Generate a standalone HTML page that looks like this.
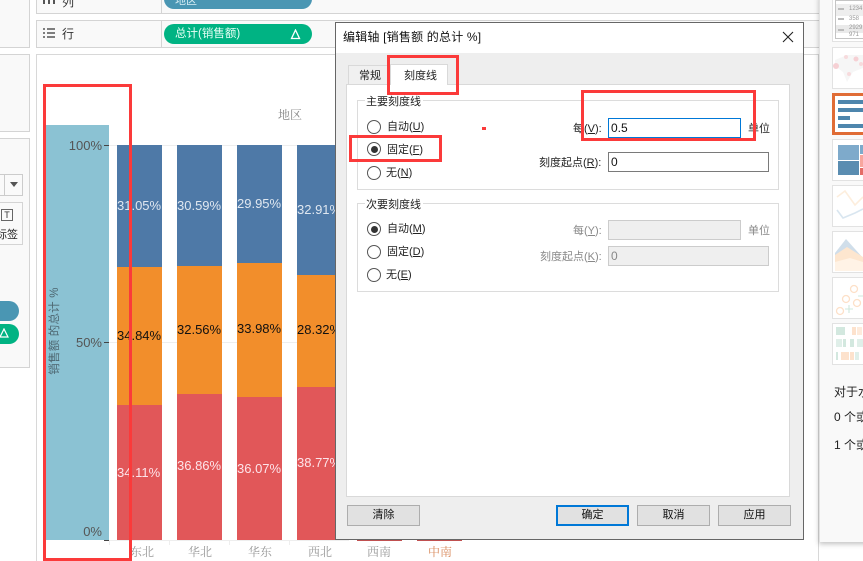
<!DOCTYPE html>
<html><head><meta charset="utf-8">
<style>
html,body{margin:0;padding:0;background:#fff}
#p{position:relative;width:863px;height:561px;overflow:hidden;background:#fff;font-family:"Liberation Sans","Noto Sans CJK SC",sans-serif;font-size:11px;color:#222}
#p div{position:absolute;box-sizing:border-box}
#p svg{position:absolute}
.t{white-space:nowrap;line-height:14px}
.box{background:#f9f9f9;border:1px solid #d4d4d4}
.lb{font-size:13px;color:#fff;white-space:nowrap;line-height:16px}
.u{text-decoration:underline}
.r{width:14px;height:14px;border:1px solid #555;border-radius:50%;background:#fff}
.r.on::after{content:"";position:absolute;left:2.5px;top:2.5px;width:7px;height:7px;border-radius:50%;background:#333}
.red{border:3px solid #fb3a3a}
.g{color:#888}
.btn{background:#e1e1e1;border:1px solid #adadad;text-align:center;font-size:11px;line-height:19px;color:#111}
.ax{font-size:13px;color:#555;white-space:nowrap;line-height:14px;text-align:right}
.xl{font-size:12px;color:#999;white-space:nowrap;line-height:14px;font-family:"Noto Serif CJK SC","Liberation Serif",serif}
.th{left:832px;width:40px;height:42px;background:#fff;border:1px solid #e2e2e2}
.tk{top:540px;width:1px;height:5px;background:#eee}
</style></head><body><div id="p">

<!-- left panels -->
<div style="left:-2px;top:-2px;width:32px;height:50px;background:#f9f9f9;border:1px solid #d4d4d4"></div>
<div style="left:-2px;top:54px;width:32px;height:78px;background:#f9f9f9;border:1px solid #d4d4d4"></div>
<div style="left:-2px;top:138px;width:32px;height:230px;background:#f9f9f9;border:1px solid #d4d4d4"></div>
<div style="left:-2px;top:174px;width:25px;height:22px;background:#fafafa;border:1px solid #ccc"></div>
<div style="left:4px;top:174px;width:1px;height:22px;background:#ccc"></div>
<svg style="left:9px;top:182px" width="10" height="6"><path d="M1 0H9L5 5Z" fill="#555"/></svg>
<div style="left:-2px;top:202px;width:25px;height:43px;background:#fafafa;border:1px solid #d4d4d4"></div>
<div style="left:1px;top:209px;width:12px;height:12px;border:1px solid #666;font-size:9px;line-height:10px;text-align:center;color:#333">T</div>
<div class="t" style="left:-2px;top:228px;font-size:11px;color:#222;width:20px;overflow:hidden;direction:rtl">标签</div>
<div style="left:-20px;top:301px;width:39px;height:20px;border-radius:10px;background:#4a96b3"></div>
<div style="left:-20px;top:324px;width:39px;height:20px;border-radius:10px;background:#00b383"></div>
<svg style="left:0;top:328px" width="10" height="11"><path d="M4 1L8 9H0Z" fill="none" stroke="#fff" stroke-width="1.2"/></svg>

<!-- shelves -->
<div class="box" style="left:36px;top:-8px;width:790px;height:22px"></div>
<div class="box" style="left:36px;top:20px;width:790px;height:28px"></div>
<div style="left:161px;top:0;width:1px;height:13px;background:#d4d4d4"></div>
<div style="left:161px;top:20px;width:1px;height:27px;background:#d4d4d4"></div>
<svg style="left:43px;top:-4px" width="13" height="10"><path d="M1 0V8M6 0V8M11 0V8" stroke="#555" stroke-width="2"/></svg>
<div class="t" style="left:62px;top:-5px;font-size:12px;color:#333">列</div>
<svg style="left:43px;top:28px" width="13" height="11"><path d="M0 1H2M4 1H12M0 5H2M4 5H12M0 9H2M4 9H12" stroke="#555" stroke-width="1.6"/></svg>
<div class="t" style="left:62px;top:27px;font-size:12px;color:#333">行</div>
<div style="left:164px;top:-11px;width:148px;height:20px;border-radius:10px;background:#4a96b3"></div>
<div class="t" style="left:175px;top:-6px;font-size:11px;color:#d8eef5">地区</div>
<div style="left:164px;top:24px;width:148px;height:20px;border-radius:10px;background:#00b383"></div>
<div class="t" style="left:175px;top:27px;font-size:11.5px;color:#e6fff6">总计(销售额)</div>
<svg style="left:290px;top:29px" width="11" height="11"><path d="M5.5 1L9.5 9.5H1.5Z" fill="none" stroke="#fff" stroke-width="1.3"/></svg>

<!-- view -->
<div style="left:36px;top:54px;width:783px;height:520px;background:#fff;border:1px solid #d8d8d8"></div>
<div class="t" style="left:278px;top:108px;font-size:12px;color:#888;font-family:'Noto Serif CJK SC',serif">地区</div>
<div style="left:109px;top:145px;width:240px;height:1px;background:#eee"></div>
<div style="left:109px;top:342px;width:240px;height:1px;background:#eee"></div>
<div style="left:109px;top:540px;width:240px;height:1px;background:#eee"></div>
<div class="tk" style="left:109px"></div>
<div class="tk" style="left:169px"></div>
<div class="tk" style="left:229px"></div>
<div class="tk" style="left:289px"></div>
<div style="left:46px;top:125px;width:63px;height:415px;background:#8bc2d3"></div>
<div style="left:104px;top:145px;width:5px;height:1px;background:#444"></div>
<div style="left:104px;top:342px;width:5px;height:1px;background:#444"></div>
<div style="left:104px;top:540px;width:5px;height:1px;background:#444"></div>
<div class="ax" style="left:60px;top:139px;width:42px">100%</div>
<div class="ax" style="left:60px;top:336px;width:42px">50%</div>
<div class="ax" style="left:60px;top:525px;width:42px">0%</div>
<div class="t" style="left:55px;top:331px;width:0;height:0;font-size:11.5px;color:#4d6670"><span style="position:absolute;transform:translate(-50%,-50%) rotate(-90deg);white-space:nowrap;letter-spacing:.2px">销售额 的总计 %</span></div>

<!-- bars -->
<div style="left:117px;top:145px;width:45px;height:122px;background:#4e79a7"></div>
<div style="left:117px;top:267px;width:45px;height:138px;background:#f28e2b"></div>
<div style="left:117px;top:405px;width:45px;height:135px;background:#e15759"></div>
<div style="left:177px;top:145px;width:45px;height:121px;background:#4e79a7"></div>
<div style="left:177px;top:266px;width:45px;height:128px;background:#f28e2b"></div>
<div style="left:177px;top:394px;width:45px;height:146px;background:#e15759"></div>
<div style="left:237px;top:145px;width:45px;height:118px;background:#4e79a7"></div>
<div style="left:237px;top:263px;width:45px;height:134px;background:#f28e2b"></div>
<div style="left:237px;top:397px;width:45px;height:143px;background:#e15759"></div>
<div style="left:297px;top:145px;width:45px;height:130px;background:#4e79a7"></div>
<div style="left:297px;top:275px;width:45px;height:112px;background:#f28e2b"></div>
<div style="left:297px;top:387px;width:45px;height:153px;background:#e15759"></div>
<div class="lb" style="left:117px;top:198px;color:#dfe7f0">31.05%</div>
<div class="lb" style="left:177px;top:198px;color:#dfe7f0">30.59%</div>
<div class="lb" style="left:237px;top:196px;color:#dfe7f0">29.95%</div>
<div class="lb" style="left:297px;top:202px;color:#dfe7f0">32.91%</div>
<div class="lb" style="left:117px;top:328px;color:#111">34.84%</div>
<div class="lb" style="left:177px;top:322px;color:#111">32.56%</div>
<div class="lb" style="left:237px;top:321px;color:#111">33.98%</div>
<div class="lb" style="left:297px;top:322px;color:#111">28.32%</div>
<div class="lb" style="left:117px;top:465px;color:#fde4ea">34.11%</div>
<div class="lb" style="left:177px;top:458px;color:#fde4ea">36.86%</div>
<div class="lb" style="left:237px;top:461px;color:#fde4ea">36.07%</div>
<div class="lb" style="left:297px;top:455px;color:#fde4ea">38.77%</div>

<div class="xl" style="left:130px;top:545px">东北</div>
<div class="xl" style="left:188px;top:545px">华北</div>
<div class="xl" style="left:248px;top:545px">华东</div>
<div class="xl" style="left:308px;top:545px">西北</div>
<div class="xl" style="left:367px;top:545px">西南</div>
<div class="xl" style="left:428px;top:545px;color:#d98a5c">中南</div>
<div style="left:357px;top:539px;width:45px;height:2px;background:#c05050"></div>
<div style="left:417px;top:539px;width:45px;height:2px;background:#c05050"></div>

<div class="red" style="left:43px;top:84px;width:89px;height:477px"></div>

<!-- right panel -->
<div style="left:819px;top:-5px;width:60px;height:547px;background:#f9f9f9;border-left:1px solid #e2e2e2;box-shadow:0 2px 5px rgba(0,0,0,.25)"></div>
<div class="th" style="top:-2px;height:44px"></div>
<div style="left:835px;top:0;width:40px;height:39px;border:1px solid #c4c4c4;background:#fff"></div>
<div style="left:836px;top:4px;width:30px;height:12px;background:#eeeeee"></div>
<div style="left:836px;top:25px;width:30px;height:8px;background:#eaeaea"></div>
<div style="left:838px;top:8px;width:6px;height:2px;background:#bbb"></div>
<div style="left:838px;top:18px;width:6px;height:2px;background:#bbb"></div>
<div style="left:838px;top:29px;width:6px;height:2px;background:#bbb"></div>
<div class="t" style="left:849px;top:5px;font-size:6px;color:#999;line-height:8px">1234</div>
<div class="t" style="left:849px;top:15px;font-size:6px;color:#999;line-height:8px">358</div>
<div class="t" style="left:849px;top:24px;font-size:6px;color:#999;line-height:8px">2929</div>
<div class="t" style="left:849px;top:31px;font-size:6px;color:#999;line-height:8px">971</div>
<div class="th" style="top:47px"></div>
<svg style="left:833px;top:50px" width="30" height="35" opacity=".65"><path d="M2 10L14 5L30 5V18L20 22L14 32L10 22L2 16Z" fill="#f2f2f2"/><circle cx="3" cy="16" r="3" fill="#f2b8be"/><circle cx="13" cy="7" r="2" fill="#f4c8cc"/><circle cx="23" cy="9" r="2.5" fill="#f2b8be"/><circle cx="16" cy="24" r="2" fill="#f4c8cc"/><circle cx="28" cy="14" r="2" fill="#f4c8cc"/></svg>
<div class="th" style="top:93px;border:3px solid #e06c35"></div>
<div style="left:838px;top:100px;width:25px;height:4px;background:#4e86ad"></div>
<div style="left:838px;top:108px;width:25px;height:4px;background:#4e86ad"></div>
<div style="left:838px;top:116px;width:12px;height:4px;background:#4e86ad"></div>
<div style="left:838px;top:124px;width:25px;height:4px;background:#4e86ad"></div>
<div class="th" style="top:139px"></div>
<div style="left:838px;top:145px;width:21px;height:15px;background:#7eaacb"></div>
<div style="left:838px;top:161px;width:21px;height:14px;background:#5a8db1"></div>
<div style="left:860px;top:145px;width:3px;height:9px;background:#7eaacb"></div>
<div style="left:860px;top:155px;width:3px;height:12px;background:#f7a59d"></div>
<div style="left:860px;top:168px;width:3px;height:7px;background:#e46c66"></div>
<div class="th" style="top:185px"></div>
<svg style="left:833px;top:186px" width="30" height="40"><path d="M4 11L12 5L22 19L30 11" fill="none" stroke="#fdeedd" stroke-width="1.6"/><path d="M4 24L10 32L22 27L30 23" fill="none" stroke="#d9e6f0" stroke-width="1.6"/></svg>
<div class="th" style="top:231px"></div>
<svg style="left:833px;top:232px" width="30" height="40"><path d="M2 21L13 7L30 26V39H2Z" fill="#d0deea"/><path d="M2 23L14 15L30 25V39H2Z" fill="#fde6cf"/><path d="M2 30L17 26L30 30V39H2Z" fill="#fff3e6"/></svg>
<div class="th" style="top:277px"></div>
<svg style="left:833px;top:278px" width="30" height="40"><g fill="none" stroke="#fde0c8" stroke-width="1.3"><circle cx="7" cy="33" r="3.5"/><circle cx="13" cy="21" r="3.5"/><circle cx="21" cy="11" r="3.5"/><circle cx="24" cy="25" r="3.5"/></g><path d="M16 27V35M12 31H20M25 18H30" stroke="#cfe8dc" stroke-width="1.1" fill="none"/></svg>
<div class="th" style="top:323px"></div>
<svg style="left:834px;top:326px" width="29" height="36"><g fill="#d3e8df"><rect x="2" y="1" width="9" height="8"/><rect x="2" y="13" width="6" height="8" opacity=".7"/><rect x="9" y="13" width="3" height="8"/><rect x="16" y="13" width="4" height="8"/><rect x="23" y="13" width="6" height="8" opacity=".7"/><rect x="2" y="26" width="2" height="8"/><rect x="21" y="26" width="4" height="8" opacity=".7"/></g><g fill="#fde2cd"><rect x="18" y="1" width="4" height="8"/><rect x="23" y="1" width="5" height="8" opacity=".7"/><rect x="7" y="26" width="8" height="8"/><rect x="16" y="26" width="4" height="8"/></g></svg>
<div class="t" style="left:834px;top:385px;font-size:12px;color:#222">对于水平</div>
<div class="t" style="left:834px;top:410px;font-size:12px;color:#222">0 个或多个</div>
<div class="t" style="left:834px;top:438px;font-size:12px;color:#222">1 个或多个</div>

<!-- dialog -->
<div style="left:335px;top:22px;width:469px;height:518px;background:#eee;border:1px solid #666"></div>
<div style="left:336px;top:23px;width:467px;height:30px;background:#fff"></div>
<div class="t" style="left:343px;top:30px;font-size:12px;color:#111;letter-spacing:.2px">编辑轴 [销售额 的总计 %]</div>
<svg style="left:782px;top:31px" width="12" height="12"><path d="M1 1L11 11M11 1L1 11" stroke="#222" stroke-width="1.1"/></svg>

<div style="left:348px;top:65px;width:40px;height:20px;background:#f0f0f0;border:1px solid #d9d9d9;border-bottom:0"></div>
<div class="t" style="left:359px;top:69px;color:#222">常规</div>
<div style="left:346px;top:84px;width:444px;height:413px;background:#fff;border:1px solid #d9d9d9"></div>
<div style="left:390px;top:64px;width:58px;height:21px;background:#fff;border:1px solid #d9d9d9;border-bottom:0"></div>
<div class="t" style="left:404px;top:69px;color:#222">刻度线</div>

<div style="left:357px;top:100px;width:422px;height:90px;border:1px solid #dcdcdc"></div>
<div class="t" style="left:365px;top:95px;background:#fff;padding:0 2px 0 1px;color:#222">主要刻度线</div>
<div class="r" style="left:367px;top:120px"></div>
<div class="t" style="left:387px;top:120px">自动(<span class="u">U</span>)</div>
<div class="r on" style="left:367px;top:142px"></div>
<div class="t" style="left:387px;top:143px">固定(<span class="u">F</span>)</div>
<div class="r" style="left:367px;top:166px"></div>
<div class="t" style="left:386px;top:166px">无(<span class="u">N</span>)</div>
<div class="t" style="left:573px;top:122px">每(<span class="u">V</span>):</div>
<div class="t" style="left:539px;top:156px">刻度起点(<span class="u">R</span>):</div>
<div style="left:608px;top:118px;width:133px;height:20px;background:#fff;border:1px solid #0078d7;font-size:12px;line-height:18px;padding-left:2px;color:#111">0.5</div>
<div class="t" style="left:748px;top:122px">单位</div>
<div style="left:608px;top:152px;width:161px;height:20px;background:#fff;border:1px solid #7a7a7a;font-size:12px;line-height:18px;padding-left:2px;color:#111">0</div>

<div style="left:357px;top:203px;width:422px;height:89px;border:1px solid #dcdcdc"></div>
<div class="t" style="left:365px;top:198px;background:#fff;padding:0 2px 0 1px;color:#222">次要刻度线</div>
<div class="r on" style="left:367px;top:222px"></div>
<div class="t" style="left:387px;top:222px">自动(<span class="u">M</span>)</div>
<div class="r" style="left:367px;top:245px"></div>
<div class="t" style="left:387px;top:245px">固定(<span class="u">D</span>)</div>
<div class="r" style="left:367px;top:268px"></div>
<div class="t" style="left:386px;top:268px">无(<span class="u">E</span>)</div>
<div class="t g" style="left:573px;top:224px">每(<span class="u">Y</span>):</div>
<div class="t g" style="left:540px;top:250px">刻度起点(<span class="u">K</span>):</div>
<div style="left:608px;top:220px;width:133px;height:20px;background:#efefef;border:1px solid #ccc"></div>
<div class="t g" style="left:748px;top:224px">单位</div>
<div style="left:608px;top:246px;width:161px;height:20px;background:#efefef;border:1px solid #ccc;font-size:12px;line-height:18px;padding-left:2px;color:#888">0</div>

<div class="btn" style="left:347px;top:505px;width:73px;height:21px">清除</div>
<div class="btn" style="left:556px;top:505px;width:73px;height:21px;border:2px solid #0078d7;line-height:17px">确定</div>
<div class="btn" style="left:637px;top:505px;width:73px;height:21px">取消</div>
<div class="btn" style="left:718px;top:505px;width:73px;height:21px">应用</div>

<!-- annotations -->
<div class="red" style="left:387px;top:55px;width:72px;height:40px"></div>
<div class="red" style="left:349px;top:135px;width:93px;height:27px"></div>
<div class="red" style="left:581px;top:90px;width:175px;height:51px"></div>
<div style="left:482px;top:127px;width:4px;height:3px;background:#fb3a3a"></div>
</div></body></html>
